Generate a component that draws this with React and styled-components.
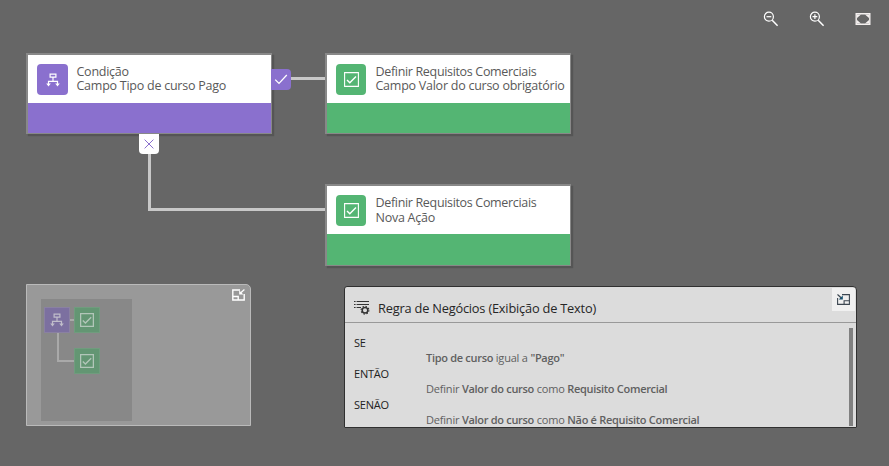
import React from 'react';
import styled, { createGlobalStyle, css } from 'styled-components';

const PURPLE = '#8a70ce';
const GREEN = '#54b573';

const GlobalStyle = createGlobalStyle`
  *, *::before, *::after { box-sizing: border-box; }
  body {
    margin: 0;
    background: #666;
    font-family: "Open Sans", "Noto Sans", sans-serif;
  }
`;

const Page = styled.main`
  display: flex;
  flex-direction: column;
  position: relative;
  width: 889px;
  height: 466px;
  overflow: hidden;
  background: #666;
`;

const Toolbar = styled.header`
  display: flex;
  justify-content: flex-end;
  align-items: center;
  gap: 30px;
  height: 38px;
  padding-right: 18px;
`;

const ToolButton = styled.button`
  display: flex;
  width: 16px;
  height: 16px;
  padding: 0;
  border: 0;
  background: none;
  color: #fff;
`;

const Canvas = styled.section`
  position: relative;
  flex: none;
  height: 246px;
`;

const Node = styled.article`
  position: absolute;
  left: ${(p) => p.$x}px;
  top: ${(p) => p.$y}px;
  display: flex;
  flex-direction: column;
  width: 246px;
  height: ${(p) => p.$h || 81}px;
  border: solid #888;
  border-width: 2px 1px 1px 2px;
  background: ${(p) => p.$color};
  box-shadow: 2px 2px 1px #555;
`;

const NodeHead = styled.div`
  display: flex;
  gap: ${(p) => p.$gap}px;
  height: 48px;
  padding: 9px 0 0 9px;
  background: #fff;
`;

const NodeIcon = styled.div`
  display: flex;
  align-items: center;
  justify-content: center;
  flex: none;
  width: ${(p) => p.$w || 30}px;
  height: 31px;
  border-radius: 4px;
  background: ${(p) => p.$color};
`;

const NodeText = styled.div`
  padding-top: ${(p) => p.$shift}px;
  color: #595959;
  font-size: 12.5px;
  line-height: ${(p) => p.$line || 14}px;
  letter-spacing: -0.25px;
  white-space: nowrap;
`;

const NodeType = styled.div`
  letter-spacing: -0.33px;
`;

const Connector = styled.div`
  position: absolute;
  left: ${(p) => p.$x}px;
  top: ${(p) => p.$y}px;
  width: ${(p) => p.$w}px;
  height: ${(p) => p.$h}px;
  border: 0 solid #c8c8c8;
  border-bottom-width: 3px;
  border-left-width: ${(p) => (p.$elbow ? 3 : 0)}px;
`;

const Badge = styled.div`
  position: absolute;
  display: flex;
  align-items: center;
  justify-content: center;
  width: 20px;
  ${(p) =>
    p.$kind === 'yes'
      ? css`
          left: 271px;
          top: 31px;
          height: 21px;
          padding-bottom: 2px;
          border-radius: 0 4px 4px 0;
          background: ${PURPLE};
        `
      : css`
          left: 139px;
          top: 96px;
          height: 20px;
          border-radius: 0 0 4px 4px;
          background: #fff;
        `}
`;

const Panels = styled.section`
  display: flex;
  align-items: flex-start;
  gap: 93px;
  padding-left: 26px;
`;

const MiniMap = styled.aside`
  display: flex;
  justify-content: space-between;
  width: 225px;
  height: 142px;
  padding: 14px 5px 4px 14px;
  border: 1px solid #bababa;
  border-radius: 0 5px 0 0;
  background: #999;
`;

const MiniCanvas = styled.div`
  position: relative;
  width: 91px;
  height: 122px;
  background: #888;
`;

const MiniNode = styled.div`
  position: absolute;
  left: ${(p) => p.$x}px;
  top: ${(p) => p.$y}px;
  display: flex;
  align-items: center;
  justify-content: center;
  width: 26px;
  height: 26px;
  border: 1px solid ${(p) => p.$edge};
  background: ${(p) => p.$color};
`;

const MiniLine = styled.div`
  position: absolute;
  left: ${(p) => p.$x}px;
  top: ${(p) => p.$y}px;
  width: ${(p) => p.$w}px;
  height: ${(p) => p.$h}px;
  border: 0 solid #a9a9a9;
  border-bottom-width: 2px;
  border-left-width: ${(p) => (p.$elbow ? 2 : 0)}px;
`;

const MiniToggle = styled.button`
  display: flex;
  width: 13px;
  height: 12px;
  margin-top: -10px;
  padding: 0;
  border: 0;
  background: none;
`;

const RulePanel = styled.section`
  display: flex;
  flex-direction: column;
  width: 513px;
  height: 142px;
  margin-top: 2px;
  overflow: hidden;
  border: 1px solid #303030;
  border-radius: 3px 4px 1px 1px;
  background: #dcdcdc;
`;

const RuleHeader = styled.header`
  display: flex;
  align-items: flex-start;
  flex: none;
  height: 36px;
  padding: 1px 1px 0 9px;
  border-bottom: 1px solid #999;
`;

const RuleIcon = styled.div`
  display: flex;
  width: 16px;
  margin-top: 12px;
`;

const RuleTitle = styled.h2`
  flex: 1;
  margin: 10px 0 0 8px;
  color: #262626;
  font-size: 12.8px;
  font-weight: 400;
  line-height: 20px;
  letter-spacing: -0.2px;
`;

const RuleToggle = styled.button`
  display: flex;
  align-items: center;
  justify-content: center;
  width: 23px;
  height: 23px;
  padding: 0 0 1px;
  border: 0;
  background: #f0f0f0;
`;

const RuleBody = styled.div`
  display: flex;
  justify-content: space-between;
  flex: 1;
  min-height: 0;
  padding: 5px 3px 1px 9px;
`;

const Rules = styled.div`
  padding-top: 7px;
  white-space: nowrap;
`;

const Keyword = styled.div`
  height: 15px;
  color: #222;
  font-size: 11px;
  line-height: 16px;
  letter-spacing: -0.2px;
`;

const Statement = styled.div`
  height: 16px;
  padding-left: 72px;
  color: #606060;
  font-size: 11px;
  line-height: 16px;
  letter-spacing: -0.2px;

  b {
    font-weight: 650;
    letter-spacing: -0.3px;
  }
`;

const Scrollbar = styled.div`
  width: 4px;
  background: #808080;
`;

const Magnifier = ({ plus }) => (
  <svg width="16" height="16" viewBox="0 0 16 16" fill="none" stroke="currentColor">
    <circle cx="5.9" cy="5.7" r="4.5" strokeWidth="1.2" />
    <path d="M9.2 9.2 14.6 14.8" strokeWidth="1.5" />
    <path d={plus ? 'M3.5 5.7h4.8M5.9 3.3v4.8' : 'M3.5 5.7h4.8'} strokeWidth="1.2" />
  </svg>
);

const FitIcon = () => (
  <svg width="16" height="16" viewBox="0 0 16 16" fill="none">
    <path d="M1.2 2.7h13.6v10.6H1.2z" stroke="#f4f0ef" strokeWidth="1.4" />
    <path
      d="M2 3.4h4L2 7zM14 3.4h-4L14 7zM2 12.6h4L2 9zM14 12.6h-4l4-3.6z"
      fill="#f4f0ef"
    />
  </svg>
);

const FlowIcon = ({ color = '#fff', size = 14 }) => (
  <svg width={size} height={size} viewBox="0 0 14 14" fill="none" stroke={color} strokeWidth="1.2">
    <path d="M4.1 1.1h5.8v3H4.1zM7 4.1v4.2M2.5 11.5V8.3h9v3.2" />
    <path d="M.2 10.5h4.6L2.5 13.5zM9.2 10.5h4.6l-2.3 3z" fill={color} stroke="none" />
  </svg>
);

const CheckBoxIcon = ({ color = '#fff', size = 15, width = 1.1 }) => (
  <svg width={size} height={size} viewBox="0 0 15 15" fill="none" stroke={color} strokeWidth={width}>
    <path d="M.6.6h13.8v13.8H.6z" />
    <path d="m3 8 2.8 2.8 6.2-6.3" strokeWidth="1.4" />
  </svg>
);

const CheckIcon = () => (
  <svg width="14" height="12" viewBox="0 0 14 12" fill="none" stroke="#fff" strokeWidth="1.3">
    <path d="m1.2 6.6 3.8 3.8L12.8 2" />
  </svg>
);

const CrossIcon = () => (
  <svg width="10" height="10" viewBox="0 0 10 10" fill="none" stroke={PURPLE} strokeWidth="1">
    <path d="m.6.6 8.8 8.8M9.4.6.6 9.4" />
  </svg>
);

const MinimizeIcon = () => (
  <svg width="13" height="12" viewBox="0 0 13 12" fill="none" stroke="#fff">
    <path d="M8 1H.8v10h11.4V5M.8 7.5h5.4V11" strokeWidth="1.4" />
    <path d="M12.4.6 8.5 4" strokeWidth="1.3" />
    <path d="M7.2 1.4v4h4.2z" fill="#fff" stroke="none" />
  </svg>
);

const DockIcon = () => (
  <svg width="13" height="11" viewBox="0 0 13 11" fill="none" stroke="#3c4650">
    <path d="M5 .6h7.4v9.8H.6V4M12.4 6.7H7.1v3.7" strokeWidth="1.1" />
    <path d="m.5.5 3.6 3.3" strokeWidth="1.2" />
    <path d="M5.8 1.4v4H1.7z" fill="#17506f" stroke="none" />
  </svg>
);

const RuleSettingsIcon = () => (
  <svg width="16" height="15" viewBox="0 0 16 15" fill="none" stroke="#333">
    <path d="M0 1.5h1.6M2.6 1.5H15M0 4.5h1.6M2.6 4.5H15M0 7.5h1.6M2.6 7.5H7" strokeWidth="1.1" />
    <circle cx="11" cy="10.2" r="2.8" strokeWidth="1.5" />
    <circle cx="11" cy="10.2" r="3.9" strokeWidth="1.1" strokeDasharray="1.5 1.56" />
  </svg>
);

const RequirementNode = ({ y, height, line, shift, subtitle }) => (
  <Node $x={325} $y={y} $h={height} $color={GREEN}>
    <NodeHead $gap={9.5}>
      <NodeIcon $color={GREEN}><CheckBoxIcon /></NodeIcon>
      <NodeText $line={line} $shift={shift}>
        <NodeType>Definir Requisitos Comerciais</NodeType>
        <div>{subtitle}</div>
      </NodeText>
    </NodeHead>
  </Node>
);

export default function App() {
  return (
    <>
      <GlobalStyle />
      <Page>
        <Toolbar>
          <ToolButton aria-label="Reduzir"><Magnifier /></ToolButton>
          <ToolButton aria-label="Ampliar"><Magnifier plus /></ToolButton>
          <ToolButton aria-label="Ajustar"><FitIcon /></ToolButton>
        </Toolbar>

        <Canvas>
          <Connector $x={291} $y={39} $w={34} $h={3} />
          <Connector $x={148} $y={116} $w={177} $h={57} $elbow />
          <Node $x={26} $y={15} $color={PURPLE}>
            <NodeHead $gap={8.5}>
              <NodeIcon $w={31} $color={PURPLE}><FlowIcon /></NodeIcon>
              <NodeText $shift={1}>
                <div>Condição</div>
                <div>Campo Tipo de curso Pago</div>
              </NodeText>
            </NodeHead>
          </Node>
          <RequirementNode y={15} shift={1} subtitle="Campo Valor do curso obrigatório" />
          <RequirementNode y={146} height={82} line={15} shift={0} subtitle="Nova Ação" />
          <Badge $kind="yes"><CheckIcon /></Badge>
          <Badge $kind="no"><CrossIcon /></Badge>
        </Canvas>

        <Panels>
          <MiniMap>
            <MiniCanvas>
              <MiniLine $x={29} $y={20} $w={5} $h={2} />
              <MiniLine $x={16} $y={34} $w={20} $h={29} $elbow />
              <MiniNode $x={3} $y={8} $edge="#8a81a2" $color="#7c70a0">
                <FlowIcon color="#c0bdca" size={14} />
              </MiniNode>
              <MiniNode $x={33} $y={8} $edge="#709c7e" $color="#639673">
                <CheckBoxIcon color="#b2c6b9" size={14} width={1.5} />
              </MiniNode>
              <MiniNode $x={33} $y={49} $edge="#709c7e" $color="#639673">
                <CheckBoxIcon color="#b2c6b9" size={14} width={1.5} />
              </MiniNode>
            </MiniCanvas>
            <MiniToggle aria-label="Minimizar mapa"><MinimizeIcon /></MiniToggle>
          </MiniMap>

          <RulePanel>
            <RuleHeader>
              <RuleIcon><RuleSettingsIcon /></RuleIcon>
              <RuleTitle>Regra de Negócios (Exibição de Texto)</RuleTitle>
              <RuleToggle aria-label="Minimizar texto"><DockIcon /></RuleToggle>
            </RuleHeader>
            <RuleBody>
              <Rules>
                <Keyword>SE</Keyword>
                <Statement><b>Tipo de curso</b> igual a <b>"Pago"</b></Statement>
                <Keyword>ENTÃO</Keyword>
                <Statement>Definir <b>Valor do curso</b> como <b>Requisito Comercial</b></Statement>
                <Keyword>SENÃO</Keyword>
                <Statement>Definir <b>Valor do curso</b> como <b>Não é Requisito Comercial</b></Statement>
              </Rules>
              <Scrollbar />
            </RuleBody>
          </RulePanel>
        </Panels>
      </Page>
    </>
  );
}
